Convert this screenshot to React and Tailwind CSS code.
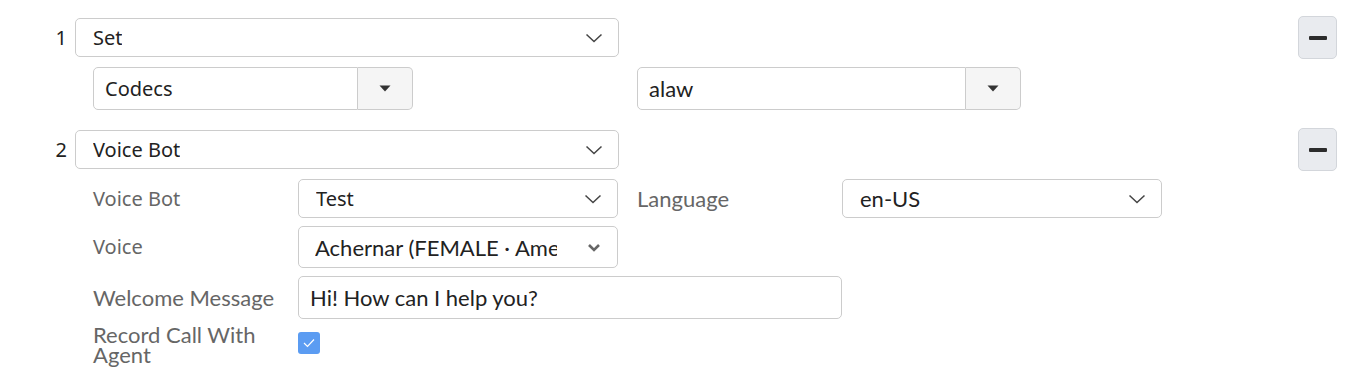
import React from 'react';

const noto = { fontFamily: '"Noto Sans", "DejaVu Sans", sans-serif', fontSize: '20px' };
const muli = { fontFamily: 'Lato, "Noto Sans", sans-serif', fontSize: '22px' };

const Chevron = () => (
  <svg width="18" height="10" viewBox="0 0 18 10" className="shrink-0">
    <path d="M1.5 1.5 L9 8.5 L16.5 1.5" fill="none" stroke="#444" strokeWidth="1.5" />
  </svg>
);

const Caret = () => (
  <svg width="12" height="7" viewBox="0 0 12 7">
    <path d="M0.5 0.5 H11.5 L6 6.5 Z" fill="#333" />
  </svg>
);

const Select = ({ value, className, font = noto }) => (
  <div className={`flex items-center justify-between border border-[#ccc] rounded-[5px] bg-white pl-[17px] pr-[15px] ${className}`}>
    <span className="text-[#222] truncate" style={font}>{value}</span>
    <Chevron />
  </div>
);

const InputGroup = ({ value, className, font = noto }) => (
  <div className={`flex h-[43px] ${className}`}>
    <div className="flex-1 flex items-center border border-[#ccc] rounded-l-[5px] bg-white pl-[11px]">
      <span className="text-[#222]" style={font}>{value}</span>
    </div>
    <div className="w-[55px] flex items-center justify-center border border-l-0 border-[#ccc] rounded-r-[5px] bg-[#f5f5f5]">
      <Caret />
    </div>
  </div>
);

const Minus = () => (
  <button className="w-[39px] h-[43px] flex items-center justify-center rounded-[5px] border border-[#d3d6db] bg-[#e9ebef]">
    <span className="block w-[18px] h-[4px] rounded-[1px] bg-[#2c2c2c]" />
  </button>
);

const Label = ({ children, font = noto, className = '' }) => (
  <div className={`w-[205px] shrink-0 text-[#666] leading-[20px] ${className}`} style={font}>{children}</div>
);

export default function App() {
  return (
    <div className="w-[1350px] h-[382px] bg-white overflow-hidden pr-[13px]">
      <div className="flex items-center justify-between pt-[16px]">
        <div className="flex items-center">
          <span className="w-[67px] text-right text-[#222]" style={noto}>1</span>
          <Select value="Set" className="ml-[8px] w-[544px] h-[39px]" />
        </div>
        <Minus />
      </div>
      <div className="flex pl-[93px] mt-[8px]">
        <InputGroup value="Codecs" className="w-[320px]" />
        <InputGroup value="alaw" className="w-[384px] ml-[224px]" font={muli} />
      </div>
      <div className="flex items-center justify-between mt-[18px]">
        <div className="flex items-center">
          <span className="w-[67px] text-right text-[#222]" style={noto}>2</span>
          <Select value="Voice Bot" className="ml-[8px] w-[544px] h-[39px]" />
        </div>
        <Minus />
      </div>
      <div className="pl-[93px] mt-[8px] flex flex-col gap-[8px]">
        <div className="flex items-center">
          <Label>Voice Bot</Label>
          <Select value="Test" className="w-[320px] h-[39px]" />
          <Label font={muli} className="ml-[19px]">Language</Label>
          <Select value="en-US" className="w-[320px] h-[39px]" font={muli} />
        </div>
        <div className="flex items-center">
          <Label>Voice</Label>
          <div className="w-[320px] h-[42px] flex items-center border border-[#ccc] rounded-[5px] bg-white pl-[16px] pr-[16px]">
            <span className="flex-1 overflow-hidden whitespace-nowrap text-[#222] mr-[30px]" style={muli}>Achernar (FEMALE · American English)</span>
            <svg width="14" height="9" viewBox="0 0 14 9" className="shrink-0">
              <path d="M2 2 L7 7 L12 2" fill="none" stroke="#666" strokeWidth="2.6" />
            </svg>
          </div>
        </div>
        <div className="flex items-center">
          <Label font={muli}>Welcome Message</Label>
          <div className="w-[544px] h-[43px] flex items-center border border-[#ccc] rounded-[5px] bg-white pl-[11px]">
            <span className="text-[#222]" style={muli}>Hi! How can I help you?</span>
          </div>
        </div>
        <div className="flex items-start mt-[8px]">
          <Label font={muli} className="mt-[-10px]">Record Call With<br />Agent</Label>
          <div className="w-[22px] h-[22px] rounded-[3px] bg-[#5b9cf2] flex items-center justify-center mt-[-3px]">
            <svg width="12" height="10" viewBox="0 0 12 10">
              <path d="M1 5 L4.5 8.5 L11 1.5" fill="none" stroke="#fff" strokeWidth="1.2" />
            </svg>
          </div>
        </div>
      </div>
    </div>
  );
}
